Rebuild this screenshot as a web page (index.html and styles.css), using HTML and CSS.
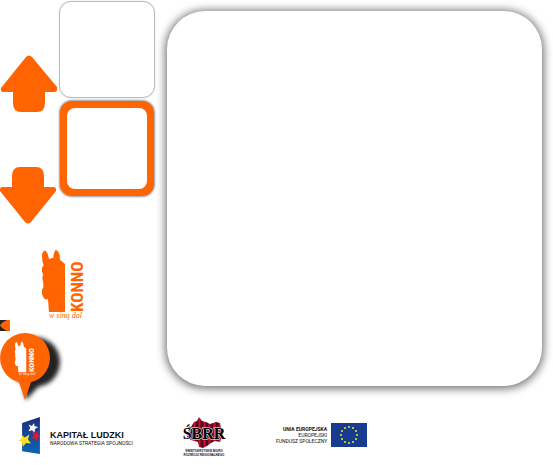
FILE: index.html
```
<!DOCTYPE html>
<html lang="pl">
<head>
<meta charset="utf-8">
<title>Konno</title>
<link rel="stylesheet" href="styles.css">
</head>
<body>
<svg class="defs" aria-hidden="true">
  <symbol id="horse" viewBox="0 0 195 240">
    <path d="M36 28Q38 19 45 16Q52 22 55 34L57 42L70 38Q71 21 77 14Q88 19 89 33L90 44L105 57V201H57L54 163H45Q39 158 36 147L36 134L40 128L40 116L37 100L39 88L36 80L36 68L41 61L37 48Z"/>
  </symbol>
</svg>
<main class="stage">
  <section class="side">
    <div class="picker">
      <nav class="arrows">
        <button class="arrow" type="button" aria-label="W górę">
          <svg viewBox="0 0 58 58"><path d="M26 2Q29 -1 32 2L57 32Q58 37 54 37H45V48Q45 57 37 57H21Q13 57 13 48V37H4Q0 37 1 33Z"/></svg>
        </button>
        <button class="arrow" type="button" aria-label="W dół">
          <svg viewBox="0 0 58 58"><path d="M25 55Q28 58 31 55L56 24Q57 20 53 20H44V9Q44 0 36 0H20Q12 0 12 9V20H3Q-1 20 0 24Z"/></svg>
        </button>
      </nav>
      <div class="thumbs">
        <div class="thumb"></div>
        <div class="thumb thumb-active"></div>
      </div>
    </div>
    <svg class="brand" viewBox="0 0 65 80" role="img" aria-label="Konno">
      <use href="#horse" width="65" height="80"/>
      <text class="brand-name" transform="translate(53 67) rotate(-90)">KONNO</text>
      <text class="brand-line" x="19" y="73">w siną dal</text>
    </svg>
    <svg class="tag" viewBox="0 0 10 11" aria-hidden="true"><path fill="#222420" d="M0 0H10V11H0Z"/><path fill="#ff6400" d="M10 0V11H7Q1 8 0 5Q2 2 7 0Z"/></svg>
    <svg class="pin" viewBox="0 0 75 74" role="img" aria-label="Konno">
      <defs><filter id="soft" x="-20%" y="-20%" width="140%" height="140%"><feGaussianBlur stdDeviation="2"/></filter></defs>
      <g filter="url(#soft)" fill="#222"><circle cx="35" cy="31" r="25"/><path d="M22 50L40 54L26 69Z"/></g>
      <circle cx="25" cy="27" r="25" fill="#ff6400"/>
      <path fill="#ff6400" d="M18 48H32L25 69Z"/>
      <use class="pin-horse" href="#horse" x="9" y="8" width="32" height="40"/>
      <text class="pin-name" transform="translate(34 41) rotate(-90)">KONNO</text>
      <text class="pin-line" x="19" y="44">w siną dal</text>
    </svg>
  </section>
  <section class="panel"></section>
</main>
<footer class="partners">
  <div class="partner capital">
    <svg viewBox="0 0 54 112" class="flag" aria-hidden="true">
      <defs><linearGradient id="blue" x1="0" y1="0" x2="0" y2="1"><stop offset="0" stop-color="#1f2f7c"/><stop offset="1" stop-color="#0866b5"/></linearGradient></defs>
      <path fill="url(#blue)" d="M0 18L54 0V112L0 104Z"/>
      <path fill="#fff" d="M36 18L38 28L49 30L39 36L38 47L30 40L19 43L25 33L20 23L30 27Z"/>
      <path fill="#dc1834" d="M49 40L47 51L54 56L48 61L45 74L38 64L26 66L35 56L30 44L40 50Z"/>
      <path fill="#ffe01c" d="M-2 53L8 62L22 53L18 68L27 80L12 79L2 90L0 76L-12 71L-1 66Z"/>
    </svg>
    <div><strong class="title">KAPITAŁ LUDZKI</strong><span class="small">NARODOWA STRATEGIA SPÓJNOŚCI</span></div>
  </div>
  <div class="partner bureau">
    <svg class="emblem" viewBox="0 0 44 32" role="img" aria-label="ŚBRR">
      <defs><linearGradient id="wine" x1="0" x2="5" gradientUnits="userSpaceOnUse" spreadMethod="repeat"><stop offset="0" stop-color="#3d0714"/><stop offset=".5" stop-color="#c8103a"/><stop offset="1" stop-color="#3d0714"/></linearGradient></defs>
      <path fill="url(#wine)" d="M5 9L9 10L12 5L15 4L17 0L20 4L24 5L28 7L34 5L38 6L39 11L42 13L40 19L38 25L33 24L29 26L25 29L21 31L17 30L16 25L9 23L5 20L7 15Z"/>
      <text class="emblem-name" x="22" y="22">ŚBRR</text>
    </svg>
    <span class="micro">ŚWIĘTOKRZYSKIE BIURO<br>ROZWOJU REGIONALNEGO</span>
  </div>
  <div class="partner union">
    <p class="small"><strong>UNIA EUROPEJSKA</strong><br>EUROPEJSKI<br>FUNDUSZ SPOŁECZNY</p>
    <svg class="eu" viewBox="0 0 36 24" aria-hidden="true"><path fill="#173b8f" d="M0 0H36V24H0Z"/><g fill="#f4e91b"><circle cx="18" cy="4" r="1"/><circle cx="22" cy="5" r="1"/><circle cx="25" cy="8" r="1"/><circle cx="26" cy="12" r="1"/><circle cx="25" cy="16" r="1"/><circle cx="22" cy="19" r="1"/><circle cx="18" cy="20" r="1"/><circle cx="14" cy="19" r="1"/><circle cx="11" cy="16" r="1"/><circle cx="10" cy="12" r="1"/><circle cx="11" cy="8" r="1"/><circle cx="14" cy="5" r="1"/></g></svg>
  </div>
</footer>
</body>
</html>
```
FILE: styles.css
```
* { box-sizing: border-box; }
body { margin: 0; background: #fff; color: #111; font-family: "Liberation Sans", Arial, sans-serif; }
svg { display: block; }
.defs { width: 0; height: 0; position: absolute; }
.stage { display: flex; align-items: flex-start; gap: 11px; padding-right: 11px; }
.side { flex: 0 0 156px; }
.picker { display: flex; gap: 1px; padding-top: 1px; }
.arrows { display: flex; flex-direction: column; gap: 54px; padding-top: 54px; }
.arrow { width: 58px; height: 58px; padding: 0; border: 0; background: none; cursor: pointer; }
.arrow svg { width: 58px; height: 58px; fill: #ff6400; }
.thumbs { display: flex; flex-direction: column; gap: 3px; }
.thumb { width: 96px; height: 97px; border: 1px solid #bbb; border-radius: 12px; box-shadow: 0 0 1px #aaa; }
.thumb-active { width: 94px; height: 95px; margin-left: 1px; padding: 7px; border: 0; background: #ff6400; box-shadow: 0 0 2px 1px #999; }
.thumb-active::before { content: ""; display: block; height: 100%; border-radius: 8px; background: #fff; }
.brand { width: 65px; height: 80px; margin: 20px 0 -5px 30px; fill: #ff6400; }
.brand-name { font: bold 17px "Noto Sans ExtraCondensed", "Roboto Condensed", "Open Sans Condensed", "Liberation Sans Narrow", sans-serif; }
.brand-line { font: italic 8px "Liberation Serif", serif; }
.tag { width: 10px; height: 11px; }
.pin { width: 75px; height: 74px; }
.pin-horse { fill: #fff; }
.pin-name { fill: #fff; font: bold 8px "Noto Sans ExtraCondensed", "Roboto Condensed", "Open Sans Condensed", "Liberation Sans Narrow", sans-serif; }
.pin-line { fill: #fff; font: italic 4px "Liberation Serif", serif; }
.panel { flex: 1; height: 375px; margin-top: 11px; border-radius: 38px; background: #fff; box-shadow: 0 1px 9px 2px #777; }
.partners { display: flex; align-items: flex-start; padding: 12px 0 0 22px; }
.partner { display: flex; }
.capital { align-items: center; gap: 10px; width: 160px; }
.flag { width: 18px; height: 37px; overflow: visible; }
.title { display: block; margin-top: 4px; font-size: 9px; line-height: 10px; }
.small { display: block; margin: 0; font-family: Roboto, sans-serif; font-size: 5px; line-height: 6px; white-space: nowrap; }
.bureau { flex-direction: column; align-items: center; width: 44px; }
.emblem { width: 44px; height: 32px; }
.emblem-name { font: bold 16px "Liberation Serif", serif; text-anchor: middle; stroke: #fff; stroke-width: 1px; paint-order: stroke; }
.micro { font-size: 3px; line-height: 4px; font-weight: bold; text-align: center; white-space: nowrap; }
.union { align-items: center; gap: 4px; margin: 6px 0 0 50px; text-align: right; }
.eu { width: 36px; height: 24px; }
```
